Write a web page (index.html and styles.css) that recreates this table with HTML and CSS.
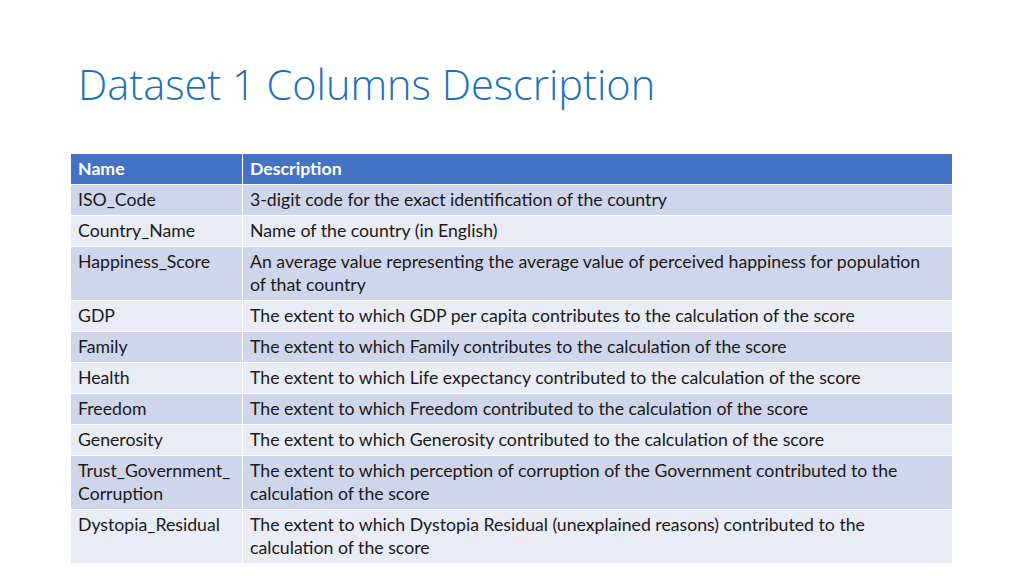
FILE: index.html
```html
<!DOCTYPE html>
<html>
<head>
<meta charset="utf-8">
<link rel="stylesheet" href="styles.css">
</head>
<body>
<div class="slide">
  <h1 class="title">Dataset 1 Columns Description</h1>
  <table class="cols">
    <thead>
      <tr><th class="c1">Name</th><th>Description</th></tr>
    </thead>
    <tbody>
      <tr><td>ISO_Code</td><td>3-digit code for the exact identification of the country</td></tr>
      <tr><td>Country_Name</td><td>Name of the country (in English)</td></tr>
      <tr><td>Happiness_Score</td><td>An average value representing the average value of perceived happiness for population of that country</td></tr>
      <tr><td>GDP</td><td>The extent to which GDP per capita contributes to the calculation of the score</td></tr>
      <tr><td>Family</td><td>The extent to which Family contributes to the calculation of the score</td></tr>
      <tr><td>Health</td><td>The extent to which Life expectancy contributed to the calculation of the score</td></tr>
      <tr><td>Freedom</td><td>The extent to which Freedom contributed to the calculation of the score</td></tr>
      <tr><td>Generosity</td><td>The extent to which Generosity contributed to the calculation of the score</td></tr>
      <tr><td>Trust_Government_<br>Corruption</td><td>The extent to which perception of corruption of the Government contributed to the calculation of the score</td></tr>
      <tr><td>Dystopia_Residual</td><td>The extent to which Dystopia Residual (unexplained reasons) contributed to the calculation of the score</td></tr>
    </tbody>
  </table>
</div>
</body>
</html>
```

FILE: styles.css
```css
html, body {
  margin: 0;
  padding: 0;
  background: #ffffff;
}
.slide {
  width: 1024px;
  height: 576px;
  overflow: hidden;
  font-family: "Lato", "Open Sans", sans-serif;
}
.title {
  margin: 0;
  padding: 57px 0 0 78px;
  height: 96px;
  box-sizing: border-box;
  font-family: "Open Sans", "Lato", sans-serif;
  font-weight: 300;
  font-size: 41.5px;
  line-height: 54px;
  color: #1a70c0;
  letter-spacing: 0;
}
.cols {
  margin: 58px 0 0 71px;
  width: 882px;
  border-collapse: collapse;
  table-layout: fixed;
  font-size: 17.7px;
  color: #1a1a1a;
}
.cols th, .cols td {
  text-align: left;
  vertical-align: top;
  padding: 3px 14px 4px 7px;
  line-height: 23px;
  border-bottom: 1px solid #ffffff;
  border-right: 1px solid #ffffff;
}
.cols td:first-child, .cols th:first-child {
  padding-right: 4px;
  white-space: nowrap;
}
.cols th {
  background: #4472c4;
  color: #ffffff;
  font-weight: 700;
}
.cols .c1 {
  width: 160px;
}
.cols tbody tr:nth-child(odd) td {
  background: #cfd5ea;
}
.cols tbody tr:nth-child(even) td {
  background: #e9ebf5;
}
```
